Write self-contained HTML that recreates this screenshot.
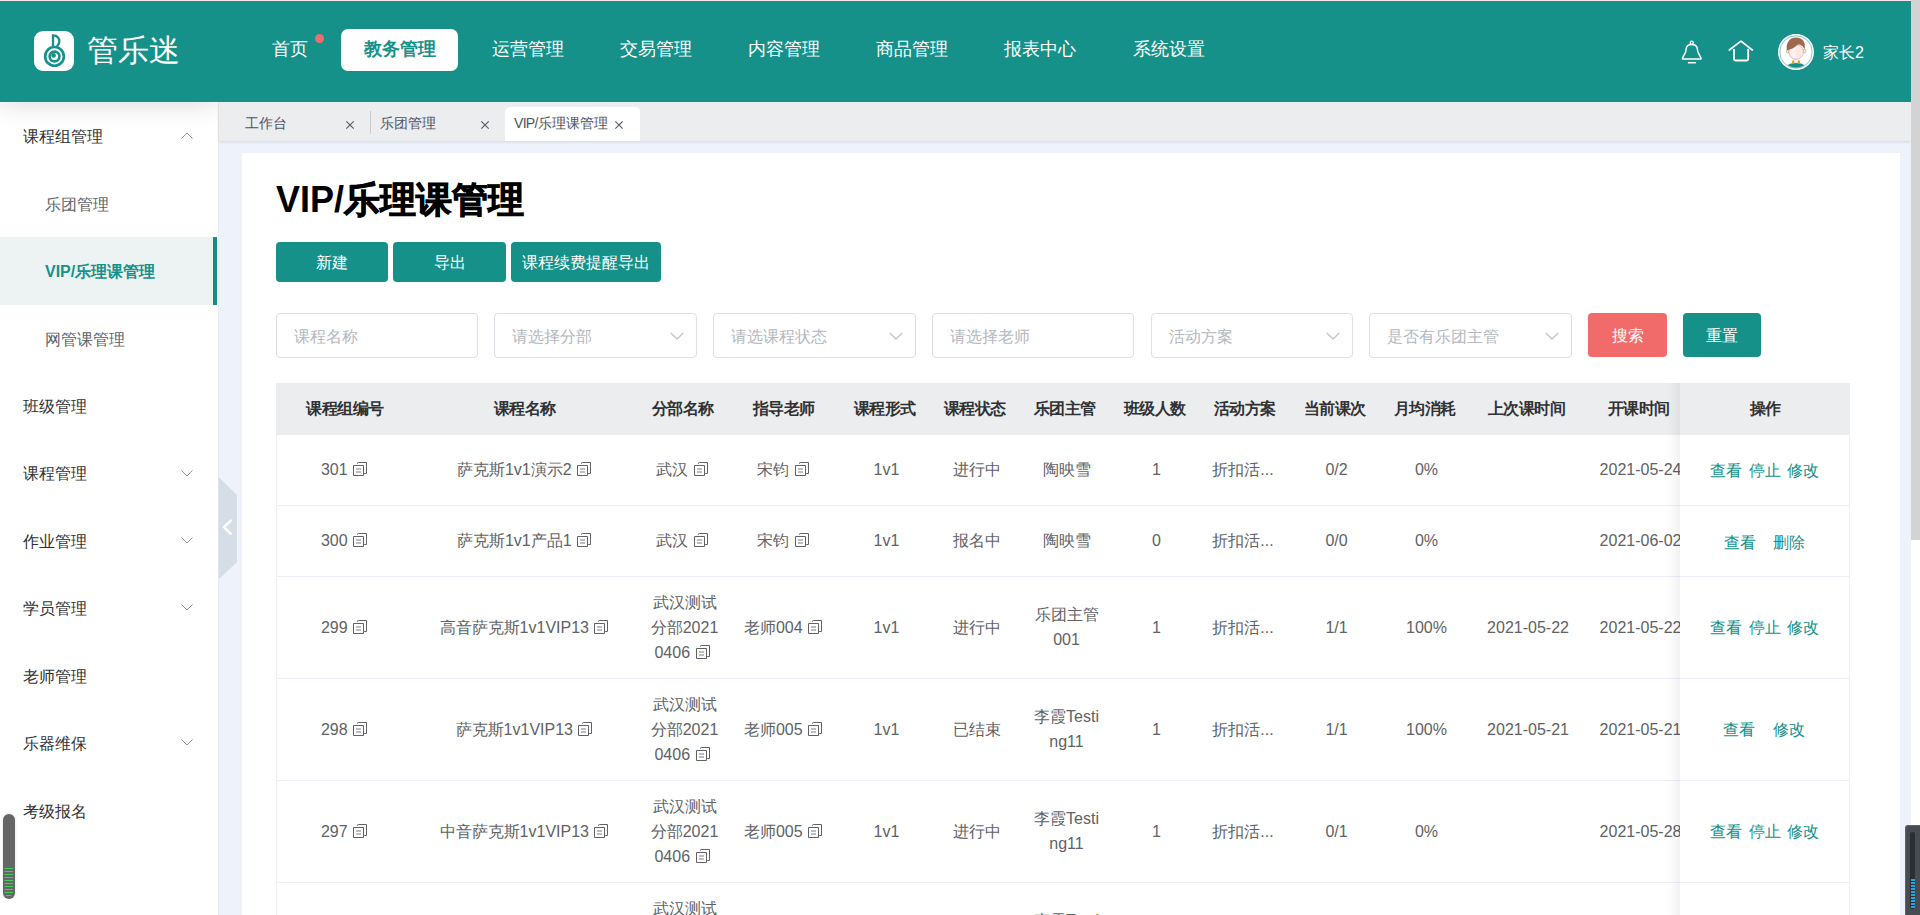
<!DOCTYPE html>
<html><head><meta charset="utf-8">
<style>
*{box-sizing:border-box;margin:0;padding:0}
html,body{width:1920px;height:915px;overflow:hidden;background:#fff;font-family:"Liberation Sans",sans-serif;color:#606266}
.abs{position:absolute}
#topline{left:0;top:0;width:1911px;height:1px;background:#f3e6ec}
#header{left:0;top:1px;width:1911px;height:101px;background:#16918a;border:0}
#logo{left:34px;top:31px;width:40px;height:40px;background:#fff;border-radius:9px}
#logotext{left:87px;top:33px;font-size:31px;line-height:36px;color:#fff;letter-spacing:0px}
.nav{top:39px;font-size:18px;line-height:20px;color:#fff;white-space:nowrap}
#pill{left:341px;top:29px;width:117px;height:42px;background:#fff;border-radius:7px}
#dot{left:315px;top:34px;width:9px;height:9px;border-radius:50%;background:#f06b6e}
/* sidebar */
#sidebar{left:0;top:102px;width:218px;height:813px;background:#fff}
#sbshadow{left:0;top:62px;width:218px;height:40px;box-shadow:0 0 28px rgba(0,0,0,.17);clip-path:inset(40px 0 -60px 0)}
#sbborder{left:218px;top:102px;width:1px;height:813px;background:#ebebeb}
.sb{left:23px;font-size:16px;line-height:20px;color:#303133;white-space:nowrap}
.sbs{left:45px;color:#606266}
.chev{left:181px;width:12px;height:7px}
#active{left:0;top:237px;width:213px;height:68px;background:#edf3f3}
#activebar{left:213px;top:237px;width:4px;height:68px;background:#138e84}
/* content */
#contentbg{left:219px;top:141px;width:1692px;height:774px;background:#eef2fa}
#tabsbar{left:219px;top:102px;width:1692px;height:39px;background:#ecedef;box-shadow:0 1px 3px rgba(0,0,0,.12)}
.tab{top:115px;font-size:14px;line-height:16px;color:#4c5260;white-space:nowrap}
.x{top:120px;width:10px;height:10px}
#tabactive{left:505px;top:107px;width:135px;height:34px;background:#fff;border-radius:5px 5px 0 0}
#tabsep{left:370px;top:111px;width:1px;height:23px;background:#c9cbd0}
#card{left:242px;top:153px;width:1658px;height:762px;background:#fff}
#title{left:276px;top:180px;font-size:36px;line-height:40px;font-weight:bold;color:#000;white-space:nowrap}
.btn{top:242px;height:40px;background:#16918a;border-radius:4px;color:#fff;font-size:16px;line-height:42px;text-align:center;white-space:nowrap}
.inp{top:313px;height:45px;border:1px solid #dcdfe6;border-radius:4px;background:#fff}
.ph{position:absolute;left:17px;top:13px;font-size:16px;line-height:20px;color:#b4b8c0;white-space:nowrap}
.sel svg{position:absolute;right:12px;top:18px}
.btn2{top:313px;height:44px;border-radius:4px;color:#fff;font-size:16px;line-height:46px;text-align:center}
/* table */
#thead{left:276px;top:383px;width:1574px;height:52px;background:#ecedef}
.th{top:399px;font-size:16px;line-height:20px;font-weight:bold;letter-spacing:-0.5px;text-indent:0.5px;color:#303133;text-align:center;white-space:nowrap}
.hl{left:276px;width:1574px;height:1px;background:#ebeef5}
#vl{left:276px;top:435px;width:1px;height:480px;background:#ebeef5}
#vr{left:1849px;top:383px;width:1px;height:532px;background:#ebeef5}
.td{font-size:16px;line-height:25px;color:#606266;text-align:center;white-space:nowrap}
.cp{display:inline-block;width:22px;height:22px;vertical-align:-6px;margin-left:-2px}
#fixed{left:1666px;top:383px;width:14px;height:532px;background:linear-gradient(to right,rgba(0,0,0,0),rgba(0,0,0,.015) 40%,rgba(0,0,0,.055))}
#fixedhead{left:1680px;top:383px;width:170px;height:52px;background:#ecedef}
#fixedbody{left:1680px;top:435px;width:170px;height:480px;background:#fff}
.op{font-size:16px;line-height:20px;color:#16918a;white-space:nowrap}
#scroll{left:1911px;top:0;width:9px;height:540px;background:#d3d3d3}
#scrolltrack{left:1911px;top:540px;width:9px;height:375px;background:#fff}
</style></head>
<body>
<div class="abs" id="topline"></div>
<div class="abs" id="header">
</div>
<div class="abs" id="logo">
 <svg width="40" height="40" viewBox="0 0 40 40" style="position:absolute;left:0;top:0">
  <circle cx="20.5" cy="25.4" r="9.35" fill="none" stroke="#16918a" stroke-width="2.6"/>
  <circle cx="20.5" cy="25.5" r="4.9" fill="none" stroke="#16918a" stroke-width="2.6"/>
  <circle cx="19.6" cy="24.4" r="2.3" fill="#16918a"/>
  <path d="M19 15.5 V4.4 C23.8 4.4 25.4 8 25.4 10.2 C25.4 12.4 24.3 14 23 15.6" fill="none" stroke="#16918a" stroke-width="2.3"/>
 </svg>
</div>
<div class="abs" id="logotext">管乐迷</div>
<div class="abs nav" style="left:272px">首页</div>
<div class="abs" id="dot"></div>
<div class="abs" id="pill"></div>
<div class="abs nav" style="left:364px;color:#16918a;font-weight:bold">教务管理</div>
<div class="abs nav" style="left:492px">运营管理</div>
<div class="abs nav" style="left:620px">交易管理</div>
<div class="abs nav" style="left:748px">内容管理</div>
<div class="abs nav" style="left:876px">商品管理</div>
<div class="abs nav" style="left:1004px">报表中心</div>
<div class="abs nav" style="left:1133px">系统设置</div>
<!-- header right icons -->
<svg class="abs" style="left:1676px;top:34px" width="84" height="36" viewBox="0 0 84 36">
 <path d="M7.3 25.1 H24.2 C25 25.1 25.3 24.6 24.9 23.9 L22.3 18.8 C21.8 17.7 21.5 16.8 21.4 15.2 C21.1 12.3 18.7 10.4 15.75 10.4 C12.8 10.4 10.4 12.3 10.1 15.2 C10 16.8 9.7 17.7 9.2 18.8 L6.6 23.9 C6.2 24.6 6.5 25.1 7.3 25.1 Z" fill="none" stroke="#fff" stroke-width="1.5" stroke-linejoin="round"/>
 <circle cx="15.75" cy="8.7" r="1.55" fill="none" stroke="#fff" stroke-width="1.3"/>
 <path d="M11.9 28.7 H19.9" stroke="#fff" stroke-width="1.5"/>
 <path d="M53.3 16 L65 7.1 L76.3 16" fill="none" stroke="#fff" stroke-width="1.8" stroke-linecap="round" stroke-linejoin="round"/>
 <path d="M58 15.6 V25 Q58 26.5 59.5 26.5 H70.7 Q72.2 26.5 72.2 25 V15.6" fill="none" stroke="#fff" stroke-width="1.8" stroke-linecap="round"/>
</svg>
<svg class="abs" style="left:1775px;top:31px" width="42" height="42" viewBox="0 0 42 42">
 <circle cx="21" cy="21" r="18" fill="#fff"/>
 <circle cx="21" cy="21" r="16.2" fill="none" stroke="#3aa39b" stroke-width="0.6"/>
 <defs><clipPath id="cc"><circle cx="21" cy="21" r="15.7"/></clipPath></defs>
 <g clip-path="url(#cc)">
  <path d="M10.5 40 C11 34 14 32.3 21 32 C28 32.3 31 34 31.5 40 Z" fill="#16918a" stroke="#7a6a60" stroke-width="0.3"/>
  <ellipse cx="12.7" cy="20" rx="1.5" ry="1.8" fill="#fdf0f0" stroke="#8a6a5a" stroke-width="0.4"/>
  <ellipse cx="29.5" cy="20" rx="1.5" ry="1.8" fill="#fdf0f0" stroke="#8a6a5a" stroke-width="0.4"/>
  <rect x="19" y="27" width="4.2" height="4" fill="#fdf0f0"/>
  <ellipse cx="21.1" cy="21" rx="7.3" ry="7.2" fill="#fdf0f0" stroke="#8a6a5a" stroke-width="0.4"/>
  <path d="M21.1 14 C25 14.5 28 18 28.4 21 C28 25 25 28 21.1 28.2 Z" fill="#fbe3de" opacity="0.7"/>
  <path d="M12 19.6 C10.6 12.5 14 6.4 21 6.4 C27.8 6.5 31 11 29.6 18.6 C28.8 16.2 27.4 14.6 25.4 13.9 C23.9 13.3 22.9 13.5 22 14.3 C19.5 16.6 15.6 18.6 12 19.6 Z" fill="#a0674f"/>
  <ellipse cx="18.2" cy="31" rx="1.2" ry="1.7" fill="#d9a21a"/>
  <ellipse cx="23.9" cy="31" rx="1.2" ry="1.7" fill="#d9a21a"/>
 </g>
</svg>
<div class="abs" style="left:1823px;top:43px;font-size:16px;line-height:20px;color:#fff;white-space:nowrap">家长2</div>

<!-- sidebar -->
<div class="abs" id="sidebar"></div>
<div class="abs" id="active"></div>
<div class="abs" id="activebar"></div>
<div class="abs" id="sbshadow"></div>
<div class="abs" id="sbborder"></div>
<div class="abs sb" style="top:127px">课程组管理</div>
<svg class="abs chev" style="top:132px" viewBox="0 0 12 7"><path d="M0.5 6.5 L6 1 L11.5 6.5" fill="none" stroke="#909399" stroke-width="1"/></svg>
<div class="abs sb sbs" style="top:195px">乐团管理</div>
<div class="abs sb sbs" style="top:262px;color:#16918a;font-weight:bold">VIP/乐理课管理</div>
<div class="abs sb sbs" style="top:330px">网管课管理</div>
<div class="abs sb" style="top:397px">班级管理</div>
<div class="abs sb" style="top:464px">课程管理</div>
<svg class="abs chev" style="top:470px" viewBox="0 0 12 7"><path d="M0.5 0.5 L6 6 L11.5 0.5" fill="none" stroke="#909399" stroke-width="1"/></svg>
<div class="abs sb" style="top:532px">作业管理</div>
<svg class="abs chev" style="top:537px" viewBox="0 0 12 7"><path d="M0.5 0.5 L6 6 L11.5 0.5" fill="none" stroke="#909399" stroke-width="1"/></svg>
<div class="abs sb" style="top:599px">学员管理</div>
<svg class="abs chev" style="top:604px" viewBox="0 0 12 7"><path d="M0.5 0.5 L6 6 L11.5 0.5" fill="none" stroke="#909399" stroke-width="1"/></svg>
<div class="abs sb" style="top:667px">老师管理</div>
<div class="abs sb" style="top:734px">乐器维保</div>
<svg class="abs chev" style="top:739px" viewBox="0 0 12 7"><path d="M0.5 0.5 L6 6 L11.5 0.5" fill="none" stroke="#909399" stroke-width="1"/></svg>
<div class="abs sb" style="top:802px">考级报名</div>
<!-- left widget -->
<div class="abs" style="left:3px;top:814px;width:12px;height:85px;background:#666;border-radius:6px;box-shadow:0 0 3px rgba(0,0,0,.15)"></div>
<svg class="abs" style="left:3px;top:865px" width="12" height="33" viewBox="0 0 12 33">
 <g stroke="#3ccf5a" stroke-width="1">
  <path d="M1.5 3.5H10"/><path d="M1.5 6.5H10"/><path d="M1.5 9.5H10"/><path d="M1.5 12.5H10"/><path d="M1.5 15.5H10"/><path d="M1.5 18.5H10"/><path d="M1.5 21.5H10"/><path d="M1.5 24.5H10"/><path d="M1.5 27.5H10"/><path d="M3 30.5H8.5"/>
 </g>
</svg>

<!-- content -->
<div class="abs" id="contentbg"></div>
<div class="abs" id="tabsbar"></div>
<div class="abs" id="tabactive"></div>
<div class="abs" id="tabsep"></div>
<div class="abs tab" style="left:245px">工作台</div>
<svg class="abs x" style="left:345px" viewBox="0 0 10 10"><path d="M1.3 1.3L8.7 8.7M8.7 1.3L1.3 8.7" stroke="#555a66" stroke-width="1.1"/></svg>
<div class="abs tab" style="left:380px">乐团管理</div>
<svg class="abs x" style="left:480px" viewBox="0 0 10 10"><path d="M1.3 1.3L8.7 8.7M8.7 1.3L1.3 8.7" stroke="#555a66" stroke-width="1.1"/></svg>
<div class="abs tab" style="left:514px"><span style="letter-spacing:-0.7px">VIP/</span>乐理课管理</div>
<svg class="abs x" style="left:614px" viewBox="0 0 10 10"><path d="M1.3 1.3L8.7 8.7M8.7 1.3L1.3 8.7" stroke="#555a66" stroke-width="1.1"/></svg>

<!-- handle -->
<svg class="abs" style="left:218px;top:477px" width="20" height="103" viewBox="0 0 20 103">
 <path d="M0.5 0 L19 18 V85 L0.5 102.5 Z" fill="#d5dee7"/>
 <path d="M12.9 43.6 L5.9 50.2 L12.9 56.8" fill="none" stroke="#fff" stroke-width="2.4" stroke-linecap="round" stroke-linejoin="round"/>
</svg>

<div class="abs" id="card"></div>
<div class="abs" id="title">VIP/<span style="-webkit-text-stroke:0.9px #000">乐理课管理</span></div>
<div class="abs btn" style="left:276px;width:112px">新建</div>
<div class="abs btn" style="left:393px;width:113px">导出</div>
<div class="abs btn" style="left:511px;width:150px">课程续费提醒导出</div>

<div class="abs inp" style="left:276px;width:202px"><span class="ph">课程名称</span></div>
<div class="abs inp sel" style="left:494px;width:203px"><span class="ph">请选择分部</span><svg width="14" height="8" viewBox="0 0 14 8"><path d="M0.8 1L7 7L13.2 1" fill="none" stroke="#c0c4cc" stroke-width="1.3"/></svg></div>
<div class="abs inp sel" style="left:713px;width:203px"><span class="ph">请选课程状态</span><svg width="14" height="8" viewBox="0 0 14 8"><path d="M0.8 1L7 7L13.2 1" fill="none" stroke="#c0c4cc" stroke-width="1.3"/></svg></div>
<div class="abs inp" style="left:932px;width:202px"><span class="ph">请选择老师</span></div>
<div class="abs inp sel" style="left:1151px;width:202px"><span class="ph">活动方案</span><svg width="14" height="8" viewBox="0 0 14 8"><path d="M0.8 1L7 7L13.2 1" fill="none" stroke="#c0c4cc" stroke-width="1.3"/></svg></div>
<div class="abs inp sel" style="left:1369px;width:203px"><span class="ph">是否有乐团主管</span><svg width="14" height="8" viewBox="0 0 14 8"><path d="M0.8 1L7 7L13.2 1" fill="none" stroke="#c0c4cc" stroke-width="1.3"/></svg></div>
<div class="abs btn2" style="left:1588px;width:79px;background:#f26b6b">搜索</div>
<div class="abs btn2" style="left:1683px;width:78px;background:#16918a">重置</div>

<!-- table -->
<div class="abs" id="thead"></div>
<div class="abs hl" style="top:505px"></div>
<div class="abs hl" style="top:576px"></div>
<div class="abs hl" style="top:678px"></div>
<div class="abs hl" style="top:780px"></div>
<div class="abs hl" style="top:882px"></div>
<div class="abs" id="vl"></div>
<div id="cells">
<div class="abs th" style="left:277.5px;width:134px">课程组编号</div>
<div class="abs th" style="left:411.5px;width:226px">课程名称</div>
<div class="abs th" style="left:637.5px;width:90px">分部名称</div>
<div class="abs th" style="left:727.5px;width:112px">指导老师</div>
<div class="abs th" style="left:839.5px;width:90px">课程形式</div>
<div class="abs th" style="left:929.5px;width:90px">课程状态</div>
<div class="abs th" style="left:1019.5px;width:90px">乐团主管</div>
<div class="abs th" style="left:1109.5px;width:90px">班级人数</div>
<div class="abs th" style="left:1199.5px;width:90px">活动方案</div>
<div class="abs th" style="left:1289.5px;width:90px">当前课次</div>
<div class="abs th" style="left:1379.5px;width:90px">月均消耗</div>
<div class="abs th" style="left:1469.5px;width:113px">上次课时间</div>
<div class="abs th" style="left:1582.5px;width:112px">开课时间</div>
<div class="abs td" style="left:279.5px;width:134px;top:457px">301 <svg class="cp" viewBox="0 0 22 22"><path d="M3.5 6.5H13.5V16.5H3.5Z" fill="none" stroke="#606266" stroke-width="1"/><path d="M7.5 4.8V4.3Q7.5 3.5 8.3 3.5H16.5V14.5H14.2" fill="none" stroke="#606266" stroke-width="1"/><path d="M6 10H11M6 13H11" stroke="#7a7c82" stroke-width="1.2"/></svg></div>
<div class="abs td" style="left:413.5px;width:226px;top:457px">萨克斯1v1演示2 <svg class="cp" viewBox="0 0 22 22"><path d="M3.5 6.5H13.5V16.5H3.5Z" fill="none" stroke="#606266" stroke-width="1"/><path d="M7.5 4.8V4.3Q7.5 3.5 8.3 3.5H16.5V14.5H14.2" fill="none" stroke="#606266" stroke-width="1"/><path d="M6 10H11M6 13H11" stroke="#7a7c82" stroke-width="1.2"/></svg></div>
<div class="abs td" style="left:639.5px;width:90px;top:457px">武汉 <svg class="cp" viewBox="0 0 22 22"><path d="M3.5 6.5H13.5V16.5H3.5Z" fill="none" stroke="#606266" stroke-width="1"/><path d="M7.5 4.8V4.3Q7.5 3.5 8.3 3.5H16.5V14.5H14.2" fill="none" stroke="#606266" stroke-width="1"/><path d="M6 10H11M6 13H11" stroke="#7a7c82" stroke-width="1.2"/></svg></div>
<div class="abs td" style="left:729.5px;width:112px;top:457px">宋钧 <svg class="cp" viewBox="0 0 22 22"><path d="M3.5 6.5H13.5V16.5H3.5Z" fill="none" stroke="#606266" stroke-width="1"/><path d="M7.5 4.8V4.3Q7.5 3.5 8.3 3.5H16.5V14.5H14.2" fill="none" stroke="#606266" stroke-width="1"/><path d="M6 10H11M6 13H11" stroke="#7a7c82" stroke-width="1.2"/></svg></div>
<div class="abs td" style="left:841.5px;width:90px;top:457px">1v1</div>
<div class="abs td" style="left:931.5px;width:90px;top:457px">进行中</div>
<div class="abs td" style="left:1021.5px;width:90px;top:457px">陶映雪</div>
<div class="abs td" style="left:1111.5px;width:90px;top:457px">1</div>
<div class="abs td" style="left:1198px;width:90px;top:457px">折扣活...</div>
<div class="abs td" style="left:1291.5px;width:90px;top:457px">0/2</div>
<div class="abs td" style="left:1381.5px;width:90px;top:457px">0%</div>
<div class="abs td" style="left:1584.5px;width:112px;top:457px;overflow:hidden;width:95.5px;"><div style="width:112px">2021-05-24</div></div>
<div class="abs td" style="left:279.5px;width:134px;top:528px">300 <svg class="cp" viewBox="0 0 22 22"><path d="M3.5 6.5H13.5V16.5H3.5Z" fill="none" stroke="#606266" stroke-width="1"/><path d="M7.5 4.8V4.3Q7.5 3.5 8.3 3.5H16.5V14.5H14.2" fill="none" stroke="#606266" stroke-width="1"/><path d="M6 10H11M6 13H11" stroke="#7a7c82" stroke-width="1.2"/></svg></div>
<div class="abs td" style="left:413.5px;width:226px;top:528px">萨克斯1v1产品1 <svg class="cp" viewBox="0 0 22 22"><path d="M3.5 6.5H13.5V16.5H3.5Z" fill="none" stroke="#606266" stroke-width="1"/><path d="M7.5 4.8V4.3Q7.5 3.5 8.3 3.5H16.5V14.5H14.2" fill="none" stroke="#606266" stroke-width="1"/><path d="M6 10H11M6 13H11" stroke="#7a7c82" stroke-width="1.2"/></svg></div>
<div class="abs td" style="left:639.5px;width:90px;top:528px">武汉 <svg class="cp" viewBox="0 0 22 22"><path d="M3.5 6.5H13.5V16.5H3.5Z" fill="none" stroke="#606266" stroke-width="1"/><path d="M7.5 4.8V4.3Q7.5 3.5 8.3 3.5H16.5V14.5H14.2" fill="none" stroke="#606266" stroke-width="1"/><path d="M6 10H11M6 13H11" stroke="#7a7c82" stroke-width="1.2"/></svg></div>
<div class="abs td" style="left:729.5px;width:112px;top:528px">宋钧 <svg class="cp" viewBox="0 0 22 22"><path d="M3.5 6.5H13.5V16.5H3.5Z" fill="none" stroke="#606266" stroke-width="1"/><path d="M7.5 4.8V4.3Q7.5 3.5 8.3 3.5H16.5V14.5H14.2" fill="none" stroke="#606266" stroke-width="1"/><path d="M6 10H11M6 13H11" stroke="#7a7c82" stroke-width="1.2"/></svg></div>
<div class="abs td" style="left:841.5px;width:90px;top:528px">1v1</div>
<div class="abs td" style="left:931.5px;width:90px;top:528px">报名中</div>
<div class="abs td" style="left:1021.5px;width:90px;top:528px">陶映雪</div>
<div class="abs td" style="left:1111.5px;width:90px;top:528px">0</div>
<div class="abs td" style="left:1198px;width:90px;top:528px">折扣活...</div>
<div class="abs td" style="left:1291.5px;width:90px;top:528px">0/0</div>
<div class="abs td" style="left:1381.5px;width:90px;top:528px">0%</div>
<div class="abs td" style="left:1584.5px;width:112px;top:528px;overflow:hidden;width:95.5px;"><div style="width:112px">2021-06-02</div></div>
<div class="abs td" style="left:279.5px;width:134px;top:615px">299 <svg class="cp" viewBox="0 0 22 22"><path d="M3.5 6.5H13.5V16.5H3.5Z" fill="none" stroke="#606266" stroke-width="1"/><path d="M7.5 4.8V4.3Q7.5 3.5 8.3 3.5H16.5V14.5H14.2" fill="none" stroke="#606266" stroke-width="1"/><path d="M6 10H11M6 13H11" stroke="#7a7c82" stroke-width="1.2"/></svg></div>
<div class="abs td" style="left:413.5px;width:226px;top:615px">高音萨克斯1v1VIP13 <svg class="cp" viewBox="0 0 22 22"><path d="M3.5 6.5H13.5V16.5H3.5Z" fill="none" stroke="#606266" stroke-width="1"/><path d="M7.5 4.8V4.3Q7.5 3.5 8.3 3.5H16.5V14.5H14.2" fill="none" stroke="#606266" stroke-width="1"/><path d="M6 10H11M6 13H11" stroke="#7a7c82" stroke-width="1.2"/></svg></div>
<div class="abs td" style="left:639.5px;width:90px;top:590px">武汉测试<br>分部2021<br>0406 <svg class="cp" viewBox="0 0 22 22"><path d="M3.5 6.5H13.5V16.5H3.5Z" fill="none" stroke="#606266" stroke-width="1"/><path d="M7.5 4.8V4.3Q7.5 3.5 8.3 3.5H16.5V14.5H14.2" fill="none" stroke="#606266" stroke-width="1"/><path d="M6 10H11M6 13H11" stroke="#7a7c82" stroke-width="1.2"/></svg></div>
<div class="abs td" style="left:729.5px;width:112px;top:615px">老师004 <svg class="cp" viewBox="0 0 22 22"><path d="M3.5 6.5H13.5V16.5H3.5Z" fill="none" stroke="#606266" stroke-width="1"/><path d="M7.5 4.8V4.3Q7.5 3.5 8.3 3.5H16.5V14.5H14.2" fill="none" stroke="#606266" stroke-width="1"/><path d="M6 10H11M6 13H11" stroke="#7a7c82" stroke-width="1.2"/></svg></div>
<div class="abs td" style="left:841.5px;width:90px;top:615px">1v1</div>
<div class="abs td" style="left:931.5px;width:90px;top:615px">进行中</div>
<div class="abs td" style="left:1021.5px;width:90px;top:602px">乐团主管<br>001</div>
<div class="abs td" style="left:1111.5px;width:90px;top:615px">1</div>
<div class="abs td" style="left:1198px;width:90px;top:615px">折扣活...</div>
<div class="abs td" style="left:1291.5px;width:90px;top:615px">1/1</div>
<div class="abs td" style="left:1381.5px;width:90px;top:615px">100%</div>
<div class="abs td" style="left:1471.5px;width:113px;top:615px">2021-05-22</div>
<div class="abs td" style="left:1584.5px;width:112px;top:615px;overflow:hidden;width:95.5px;"><div style="width:112px">2021-05-22</div></div>
<div class="abs td" style="left:279.5px;width:134px;top:717px">298 <svg class="cp" viewBox="0 0 22 22"><path d="M3.5 6.5H13.5V16.5H3.5Z" fill="none" stroke="#606266" stroke-width="1"/><path d="M7.5 4.8V4.3Q7.5 3.5 8.3 3.5H16.5V14.5H14.2" fill="none" stroke="#606266" stroke-width="1"/><path d="M6 10H11M6 13H11" stroke="#7a7c82" stroke-width="1.2"/></svg></div>
<div class="abs td" style="left:413.5px;width:226px;top:717px">萨克斯1v1VIP13 <svg class="cp" viewBox="0 0 22 22"><path d="M3.5 6.5H13.5V16.5H3.5Z" fill="none" stroke="#606266" stroke-width="1"/><path d="M7.5 4.8V4.3Q7.5 3.5 8.3 3.5H16.5V14.5H14.2" fill="none" stroke="#606266" stroke-width="1"/><path d="M6 10H11M6 13H11" stroke="#7a7c82" stroke-width="1.2"/></svg></div>
<div class="abs td" style="left:639.5px;width:90px;top:692px">武汉测试<br>分部2021<br>0406 <svg class="cp" viewBox="0 0 22 22"><path d="M3.5 6.5H13.5V16.5H3.5Z" fill="none" stroke="#606266" stroke-width="1"/><path d="M7.5 4.8V4.3Q7.5 3.5 8.3 3.5H16.5V14.5H14.2" fill="none" stroke="#606266" stroke-width="1"/><path d="M6 10H11M6 13H11" stroke="#7a7c82" stroke-width="1.2"/></svg></div>
<div class="abs td" style="left:729.5px;width:112px;top:717px">老师005 <svg class="cp" viewBox="0 0 22 22"><path d="M3.5 6.5H13.5V16.5H3.5Z" fill="none" stroke="#606266" stroke-width="1"/><path d="M7.5 4.8V4.3Q7.5 3.5 8.3 3.5H16.5V14.5H14.2" fill="none" stroke="#606266" stroke-width="1"/><path d="M6 10H11M6 13H11" stroke="#7a7c82" stroke-width="1.2"/></svg></div>
<div class="abs td" style="left:841.5px;width:90px;top:717px">1v1</div>
<div class="abs td" style="left:931.5px;width:90px;top:717px">已结束</div>
<div class="abs td" style="left:1021.5px;width:90px;top:704px">李霞Testi<br>ng11</div>
<div class="abs td" style="left:1111.5px;width:90px;top:717px">1</div>
<div class="abs td" style="left:1198px;width:90px;top:717px">折扣活...</div>
<div class="abs td" style="left:1291.5px;width:90px;top:717px">1/1</div>
<div class="abs td" style="left:1381.5px;width:90px;top:717px">100%</div>
<div class="abs td" style="left:1471.5px;width:113px;top:717px">2021-05-21</div>
<div class="abs td" style="left:1584.5px;width:112px;top:717px;overflow:hidden;width:95.5px;"><div style="width:112px">2021-05-21</div></div>
<div class="abs td" style="left:279.5px;width:134px;top:819px">297 <svg class="cp" viewBox="0 0 22 22"><path d="M3.5 6.5H13.5V16.5H3.5Z" fill="none" stroke="#606266" stroke-width="1"/><path d="M7.5 4.8V4.3Q7.5 3.5 8.3 3.5H16.5V14.5H14.2" fill="none" stroke="#606266" stroke-width="1"/><path d="M6 10H11M6 13H11" stroke="#7a7c82" stroke-width="1.2"/></svg></div>
<div class="abs td" style="left:413.5px;width:226px;top:819px">中音萨克斯1v1VIP13 <svg class="cp" viewBox="0 0 22 22"><path d="M3.5 6.5H13.5V16.5H3.5Z" fill="none" stroke="#606266" stroke-width="1"/><path d="M7.5 4.8V4.3Q7.5 3.5 8.3 3.5H16.5V14.5H14.2" fill="none" stroke="#606266" stroke-width="1"/><path d="M6 10H11M6 13H11" stroke="#7a7c82" stroke-width="1.2"/></svg></div>
<div class="abs td" style="left:639.5px;width:90px;top:794px">武汉测试<br>分部2021<br>0406 <svg class="cp" viewBox="0 0 22 22"><path d="M3.5 6.5H13.5V16.5H3.5Z" fill="none" stroke="#606266" stroke-width="1"/><path d="M7.5 4.8V4.3Q7.5 3.5 8.3 3.5H16.5V14.5H14.2" fill="none" stroke="#606266" stroke-width="1"/><path d="M6 10H11M6 13H11" stroke="#7a7c82" stroke-width="1.2"/></svg></div>
<div class="abs td" style="left:729.5px;width:112px;top:819px">老师005 <svg class="cp" viewBox="0 0 22 22"><path d="M3.5 6.5H13.5V16.5H3.5Z" fill="none" stroke="#606266" stroke-width="1"/><path d="M7.5 4.8V4.3Q7.5 3.5 8.3 3.5H16.5V14.5H14.2" fill="none" stroke="#606266" stroke-width="1"/><path d="M6 10H11M6 13H11" stroke="#7a7c82" stroke-width="1.2"/></svg></div>
<div class="abs td" style="left:841.5px;width:90px;top:819px">1v1</div>
<div class="abs td" style="left:931.5px;width:90px;top:819px">进行中</div>
<div class="abs td" style="left:1021.5px;width:90px;top:806px">李霞Testi<br>ng11</div>
<div class="abs td" style="left:1111.5px;width:90px;top:819px">1</div>
<div class="abs td" style="left:1198px;width:90px;top:819px">折扣活...</div>
<div class="abs td" style="left:1291.5px;width:90px;top:819px">0/1</div>
<div class="abs td" style="left:1381.5px;width:90px;top:819px">0%</div>
<div class="abs td" style="left:1584.5px;width:112px;top:819px;overflow:hidden;width:95.5px;"><div style="width:112px">2021-05-28</div></div>
<div class="abs td" style="left:279.5px;width:134px;top:921px">296 <svg class="cp" viewBox="0 0 22 22"><path d="M3.5 6.5H13.5V16.5H3.5Z" fill="none" stroke="#606266" stroke-width="1"/><path d="M7.5 4.8V4.3Q7.5 3.5 8.3 3.5H16.5V14.5H14.2" fill="none" stroke="#606266" stroke-width="1"/><path d="M6 10H11M6 13H11" stroke="#7a7c82" stroke-width="1.2"/></svg></div>
<div class="abs td" style="left:413.5px;width:226px;top:921px">萨克斯1v1VIP13 <svg class="cp" viewBox="0 0 22 22"><path d="M3.5 6.5H13.5V16.5H3.5Z" fill="none" stroke="#606266" stroke-width="1"/><path d="M7.5 4.8V4.3Q7.5 3.5 8.3 3.5H16.5V14.5H14.2" fill="none" stroke="#606266" stroke-width="1"/><path d="M6 10H11M6 13H11" stroke="#7a7c82" stroke-width="1.2"/></svg></div>
<div class="abs td" style="left:639.5px;width:90px;top:896px">武汉测试<br>分部2021<br>0406 <svg class="cp" viewBox="0 0 22 22"><path d="M3.5 6.5H13.5V16.5H3.5Z" fill="none" stroke="#606266" stroke-width="1"/><path d="M7.5 4.8V4.3Q7.5 3.5 8.3 3.5H16.5V14.5H14.2" fill="none" stroke="#606266" stroke-width="1"/><path d="M6 10H11M6 13H11" stroke="#7a7c82" stroke-width="1.2"/></svg></div>
<div class="abs td" style="left:729.5px;width:112px;top:921px">老师005 <svg class="cp" viewBox="0 0 22 22"><path d="M3.5 6.5H13.5V16.5H3.5Z" fill="none" stroke="#606266" stroke-width="1"/><path d="M7.5 4.8V4.3Q7.5 3.5 8.3 3.5H16.5V14.5H14.2" fill="none" stroke="#606266" stroke-width="1"/><path d="M6 10H11M6 13H11" stroke="#7a7c82" stroke-width="1.2"/></svg></div>
<div class="abs td" style="left:841.5px;width:90px;top:921px">1v1</div>
<div class="abs td" style="left:931.5px;width:90px;top:921px">进行中</div>
<div class="abs td" style="left:1021.5px;width:90px;top:908px">李霞Testi<br>ng11</div>
<div class="abs td" style="left:1111.5px;width:90px;top:921px">1</div>
<div class="abs td" style="left:1198px;width:90px;top:921px">折扣活...</div>
<div class="abs td" style="left:1291.5px;width:90px;top:921px">0/1</div>
<div class="abs td" style="left:1381.5px;width:90px;top:921px">0%</div>
<div class="abs td" style="left:1584.5px;width:112px;top:921px;overflow:hidden;width:95.5px;"><div style="width:112px">2021-05-28</div></div>
</div><!--/cells-->
<div class="abs" id="fixed"></div>
<div class="abs" id="fixedhead"></div>
<div class="abs" id="fixedbody"></div>
<div class="abs hl" style="top:505px;left:1680px;width:170px"></div>
<div class="abs hl" style="top:576px;left:1680px;width:170px"></div>
<div class="abs hl" style="top:678px;left:1680px;width:170px"></div>
<div class="abs hl" style="top:780px;left:1680px;width:170px"></div>
<div class="abs hl" style="top:882px;left:1680px;width:170px"></div>
<div class="abs" id="vr"></div>
<div class="abs th" style="left:1680px;width:170px">操作</div>
<div id="ops">
<div class="abs op" style="left:1710px;top:461px">查看</div>
<div class="abs op" style="left:1749px;top:461px">停止</div>
<div class="abs op" style="left:1787px;top:461px">修改</div>
<div class="abs op" style="left:1724px;top:533px">查看</div>
<div class="abs op" style="left:1773px;top:533px">删除</div>
<div class="abs op" style="left:1710px;top:618px">查看</div>
<div class="abs op" style="left:1749px;top:618px">停止</div>
<div class="abs op" style="left:1787px;top:618px">修改</div>
<div class="abs op" style="left:1723px;top:720px">查看</div>
<div class="abs op" style="left:1773px;top:720px">修改</div>
<div class="abs op" style="left:1710px;top:822px">查看</div>
<div class="abs op" style="left:1749px;top:822px">停止</div>
<div class="abs op" style="left:1787px;top:822px">修改</div>
</div><!--/ops-->

<!-- scrollbar -->
<div class="abs" id="scroll"></div>
<div class="abs" id="scrolltrack"></div>
<!-- right widget -->
<div class="abs" style="left:1905px;top:825px;width:15px;height:90px;background:#474c53;border:1px solid #5c636b;border-right:0;border-bottom:0;border-radius:3px 0 0 0"></div><div class="abs" style="left:1910px;top:832px;width:5px;height:77px;background:#2b2f35;border-radius:2px"></div><div class="abs" style="left:1910.5px;top:879px;width:4px;height:2px;background:#2aa5db"></div><div class="abs" style="left:1910.5px;top:882px;width:4px;height:2px;background:#2aa5db"></div><div class="abs" style="left:1910.5px;top:885px;width:4px;height:2px;background:#2aa5db"></div><div class="abs" style="left:1910.5px;top:888px;width:4px;height:2px;background:#2aa5db"></div><div class="abs" style="left:1910.5px;top:891px;width:4px;height:2px;background:#2aa5db"></div><div class="abs" style="left:1910.5px;top:894px;width:4px;height:2px;background:#2aa5db"></div><div class="abs" style="left:1910.5px;top:897px;width:4px;height:2px;background:#2aa5db"></div><div class="abs" style="left:1910.5px;top:900px;width:4px;height:2px;background:#2aa5db"></div><div class="abs" style="left:1910.5px;top:903px;width:4px;height:2px;background:#2aa5db"></div><div class="abs" style="left:1910.5px;top:906px;width:4px;height:2px;background:#2aa5db"></div>
</body></html>
